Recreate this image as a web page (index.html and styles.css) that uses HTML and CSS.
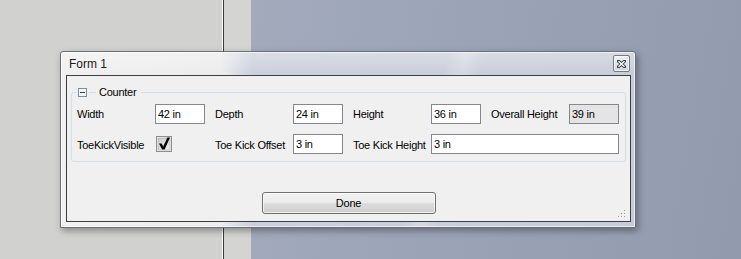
FILE: index.html
```html
<!doctype html>
<html>
    <head>
        <title>Form 1</title>
        <link rel="stylesheet" href="styles.css">
    </head>
    <body>
        <div class="desktop">
            <div class="pane-left"></div>
            <div class="splitter"></div>
            <div class="pane-mid"></div>
            <div class="pane-right"></div>
        </div>

        <div class="window">
            <div class="titlebar">
                <span class="title">Form 1</span>
                <button class="close" title="Close">
                    <svg width="9" height="8" viewBox="0 0 9 8">
                        <path d="M1.5 1.2 L7.5 6.8 M7.5 1.2 L1.5 6.8" stroke="#3b414b" stroke-width="3.2" stroke-linecap="square"/>
                        <path d="M1.5 1.2 L7.5 6.8 M7.5 1.2 L1.5 6.8" stroke="#fff" stroke-width="1.4"/>
                    </svg>
                </button>
            </div>

            <div class="client">
                <fieldset class="group">
                    <legend>
                        <svg class="toggle" width="9" height="9" viewBox="0 0 9 9">
                            <rect x="0.5" y="0.5" width="8" height="8" fill="#f4f6f9" stroke="#7d8ba3"/>
                            <rect x="2" y="4" width="5" height="1" fill="#2f3d5a"/>
                        </svg>
                        <span class="dash"></span>
                        <span class="caption">Counter</span>
                    </legend>
                    <div class="fields">
                        <label>Width</label>
                        <input value="42 in">
                        <label>Depth</label>
                        <input value="24 in">
                        <label>Height</label>
                        <input value="36 in">
                        <label>Overall Height</label>
                        <input class="readonly" value="39 in" readonly>

                        <label class="low">ToeKickVisible</label>
                        <span class="check">
                            <svg width="16" height="16" viewBox="0 0 16 16">
                                <defs>
                                    <linearGradient id="cb" x1="0" y1="0" x2="1" y2="1">
                                        <stop offset="0" stop-color="#c9c9c9"/>
                                        <stop offset="1" stop-color="#efefef"/>
                                    </linearGradient>
                                </defs>
                                <rect x="0.5" y="0.5" width="15" height="15" fill="#f4f4f4" stroke="#8e8f8f"/>
                                <rect x="2" y="2" width="12" height="12" fill="url(#cb)" stroke="#a9a9a9" stroke-width="0.6"/>
                                <polygon points="3,7.5 5.6,7.5 7.2,10.6 11.4,1.6 14,1.6 8.6,13.4 6.1,13.4" fill="#000"/>
                            </svg>
                        </span>
                        <label class="low">Toe Kick Offset</label>
                        <input value="3 in">
                        <label class="low">Toe Kick Height</label>
                        <input class="wide" value="3 in">
                    </div>
                </fieldset>

                <div class="actions">
                    <button class="done">Done</button>
                </div>

                <svg class="grip" width="9" height="9" viewBox="0 0 9 9">
                    <rect x="6" y="0" width="1" height="1" fill="#9a9a9a"/>
                    <rect x="7" y="1" width="1" height="1" fill="#fff"/>
                    <rect x="3" y="3" width="1" height="1" fill="#9a9a9a"/>
                    <rect x="4" y="4" width="1" height="1" fill="#fff"/>
                    <rect x="6" y="3" width="1" height="1" fill="#9a9a9a"/>
                    <rect x="7" y="4" width="1" height="1" fill="#fff"/>
                    <rect x="0" y="6" width="1" height="1" fill="#9a9a9a"/>
                    <rect x="1" y="7" width="1" height="1" fill="#fff"/>
                    <rect x="3" y="6" width="1" height="1" fill="#9a9a9a"/>
                    <rect x="4" y="7" width="1" height="1" fill="#fff"/>
                    <rect x="6" y="6" width="1" height="1" fill="#9a9a9a"/>
                    <rect x="7" y="7" width="1" height="1" fill="#fff"/>
                </svg>
            </div>
        </div>
    </body>
</html>
```

FILE: styles.css
```css
* { margin: 0; padding: 0; box-sizing: border-box; }

body {
    position: relative;
    width: 741px;
    height: 259px;
    overflow: hidden;
    font-family: 'Liberation Sans', Arial, sans-serif;
    font-size: 11px;
    letter-spacing: -0.25px;
    color: #000;
}

/* desktop behind the dialog */
.desktop {
    display: flex;
    height: 100%;
}

.pane-left {
    width: 222px;
    background: #d1d1cf;
}

.splitter {
    width: 2px;
    border-left: 1px solid #ffffff;
    background: #3b3b3b;
}

.pane-mid {
    width: 27px;
    background: #d4d4d3;
}

.pane-right {
    flex: 1;
    background: linear-gradient(100deg, #a2aabc 0%, #99a2b5 55%, #929bad 100%);
}

/* dialog window */
.window {
    position: absolute;
    left: 60px;
    top: 51px;
    width: 576px;
    height: 177px;
    display: flex;
    flex-direction: column;
    padding: 0 4px 5px 5px;
    border: 1px solid #6b717b;
    border-radius: 3px 3px 0 0;
    background:
        linear-gradient(105deg, transparent 375px, rgba(255,255,255,.22) 392px, transparent 410px),
        linear-gradient(to bottom, rgba(255,255,255,.3), rgba(255,255,255,0) 24px),
        linear-gradient(to right, #f0f0f0 0, #ececec 160px, #cacfdb 192px, #c6ccd8 100%);
    box-shadow: inset 0 0 0 1px rgba(255,255,255,.6), 2px 3px 7px rgba(0,0,0,.35);
}

.titlebar {
    height: 23px;
    display: flex;
    align-items: center;
    justify-content: space-between;
    padding: 0 1px 0 3px;
}

.title {
    font-size: 12px;
    letter-spacing: 0;
    color: #1a1a1a;
}

.close {
    width: 17px;
    height: 17px;
    display: flex;
    align-items: center;
    justify-content: center;
    border: 1px solid #747b86;
    border-radius: 2px;
    background: linear-gradient(#eef0f3, #d2d7df);
    box-shadow: inset 0 0 0 1px rgba(255,255,255,.6);
}

.client {
    position: relative;
    flex: 1;
    display: flex;
    flex-direction: column;
    padding: 9px 4px 0 4px;
    background: #f0f0f0;
    border: 1px solid #3e3e3e;
}

/* group box */
.group {
    border: 1px solid #d5dde6;
    border-radius: 3px;
    padding: 5px 6px 7px 5px;
}

.group legend {
    display: flex;
    align-items: center;
    height: 14px;
    padding: 0 5px 0 1px;
}

.group .dash {
    width: 7px;
    height: 1px;
    margin: 0 3px 0 2px;
    background: #d5dde6;
}

.fields {
    display: grid;
    grid-template-columns: 78px 60px 78px 60px 78px 60px 78px 50px;
    grid-template-rows: 20px 20px;
    row-gap: 10px;
    align-items: center;
}

.fields label {
    white-space: nowrap;
}

.fields label.low {
    padding-top: 2px;
}

.fields input {
    width: 50px;
    height: 20px;
    padding: 0 2px;
    border: 1px solid #838790;
    background: #fff;
    font: inherit;
    letter-spacing: inherit;
    color: #000;
    outline: none;
}

.fields input.readonly {
    background: #e4e4e4;
}

.fields input.wide {
    grid-column: 6 / 9;
    width: 100%;
}

.check {
    display: flex;
    padding-left: 1px;
}

.actions {
    display: flex;
    justify-content: center;
    margin-top: 30px;
}

.done {
    width: 174px;
    height: 22px;
    border: 1px solid #707070;
    border-radius: 3px;
    background: linear-gradient(#f2f2f2 0%, #ebebeb 50%, #dddddd 50%, #cfcfcf 100%);
    box-shadow: inset 0 0 0 1px rgba(255,255,255,.7);
    font: inherit;
    letter-spacing: inherit;
    color: #000;
}

/* size grip in the corner */
.grip {
    position: absolute;
    right: 3px;
    bottom: 2px;
}
```
